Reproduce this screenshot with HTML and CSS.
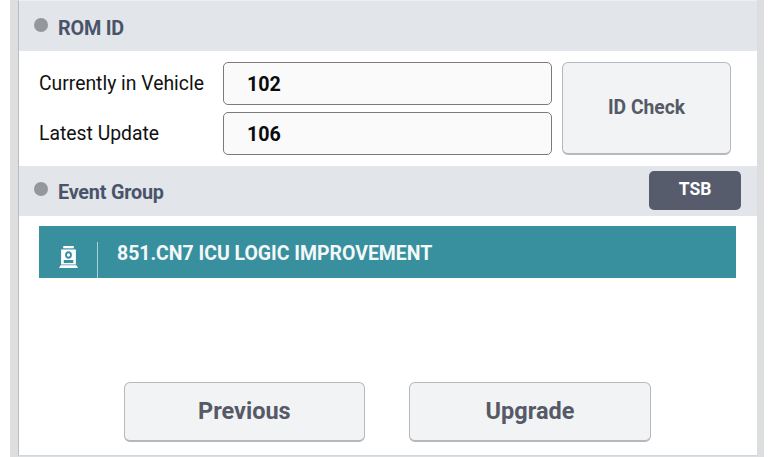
FILE: index.html
```html
<!DOCTYPE html>
<html lang="en">
<head>
<meta charset="utf-8">
<title>ROM ID</title>
<link rel="stylesheet" href="styles.css">
</head>
<body>
<main class="frame">
  <div class="panel">
    <header class="section-head rom-head">
      <span class="dot"></span>
      <h2 class="section-title">ROM ID</h2>
    </header>
    <section class="rom-body">
      <div class="rom-fields">
        <div class="field">
          <span class="field-label">Currently in Vehicle</span>
          <div class="field-value">102</div>
        </div>
        <div class="field">
          <span class="field-label">Latest Update</span>
          <div class="field-value">106</div>
        </div>
      </div>
      <button class="btn btn-check" type="button">ID Check</button>
    </section>
    <header class="section-head event-head">
      <span class="dot"></span>
      <h2 class="section-title">Event Group</h2>
      <button class="btn-tsb" type="button">TSB</button>
    </header>
    <section class="event-body">
      <div class="event-row">
        <span class="event-icon">
          <svg viewBox="1 1 18 19" width="19" height="22" preserveAspectRatio="none" aria-hidden="true">
            <rect x="5" y="1" width="10" height="2" fill="#fff"/>
            <path fill="#fff" fill-rule="evenodd" d="M3 4h14v13H3z M10 5.6a3.2 3.2 0 1 0 0 6.4a3.2 3.2 0 0 0 0-6.4z M5.5 13v2.6h9V13z"/>
            <circle cx="10" cy="8.8" r="1.5" fill="#fff"/>
            <path fill="#fff" d="M2.5 17.6h15l1.5 2.4H1z"/>
          </svg>
        </span>
        <span class="event-text">851.CN7 ICU LOGIC IMPROVEMENT</span>
      </div>
    </section>
    <footer class="actions">
      <button class="btn btn-action" type="button">Previous</button>
      <button class="btn btn-action" type="button">Upgrade</button>
    </footer>
  </div>
</main>
</body>
</html>
```
FILE: styles.css
```css
* { box-sizing: border-box; }
html, body { margin: 0; height: 457px; background: #fff; overflow: hidden; }
body { font-family: Roboto, "Liberation Sans", sans-serif; padding-left: 10px; }
.frame {
  width: 754px;
  height: 457px;
  background: #dcdee0;
  padding: 0 7px 0 9px;
}
.panel {
  height: 456px;
  background: #fff;
  border-top: 1px solid #eef0f2;
  border-bottom: 1px solid #d4d6d9;
  display: flex;
  flex-direction: column;
  border-left: 1px solid #b9bcc0;
  margin-left: -1px;
}
.section-head {
  display: flex;
  align-items: center;
  background: #e2e5e9;
  padding-left: 15px;
  flex: none;
}
.rom-head { height: 50px; }
.event-head { height: 50px; position: relative; padding-bottom: 2px; }
.dot {
  width: 14px;
  height: 14px;
  border-radius: 50%;
  background: #94979c;
  margin-right: 10px;
  margin-top: -2px;
}
.section-title {
  margin: 5px 0 0;
  font-size: 19.8px;
  font-weight: 700;
  letter-spacing: -0.2px;
  color: #49546a;
}
.rom-body {
  display: flex;
  height: 115px;
  padding: 11px 25px 0 20px;
  gap: 10px;
  flex: none;
}
.rom-fields { width: 513px; display: flex; flex-direction: column; gap: 7px; }
.field { display: flex; align-items: center; }
.field-label {
  width: 184px;
  font-size: 19.35px;
  color: #111;
}
.field-value {
  width: 329px;
  height: 43px;
  border: 1px solid #7b7b7b;
  border-radius: 5px;
  background: #fafafa;
  padding: 2px 0 0 23px;
  display: flex;
  align-items: center;
  font-size: 19.7px;
  font-weight: 700;
  color: #0b0b0b;
}
.btn {
  font-family: inherit;
  font-weight: 700;
  color: #565a67;
  background: #f1f3f5;
  border: 1px solid #b6b8bb;
  border-bottom-width: 2px;
  border-radius: 6px;
  padding: 0;
}
.btn-check { width: 169px; height: 93px; font-size: 19.3px; padding-bottom: 2px; }
.btn-tsb {
  position: absolute;
  left: 630px;
  top: 5px;
  width: 92px;
  height: 39px;
  border: 0;
  border-radius: 5px;
  background: #575c6c;
  color: #fff;
  font-family: inherit;
  font-size: 17.5px;
  font-weight: 700;
  padding: 0 0 3px;
}
.event-body { padding: 10px 20px 0; flex: none; }
.event-row {
  width: 697px;
  height: 52px;
  background: #38909f;
  display: flex;
  align-items: flex-end;
}
.event-icon {
  width: 59px;
  height: 36px;
  flex: none;
  display: flex;
  align-items: center;
  justify-content: center;
  border-right: 1px solid #a9d3da;
  padding-bottom: 6px;
}
.event-text {
  align-self: center;
  margin-left: 19px;
  margin-top: 2px;
  font-size: 19.45px;
  font-weight: 700;
  color: #f4f8f9;
}
.actions {
  display: flex;
  gap: 44px;
  margin-top: 104px;
  padding-left: 104.5px;
}
.btn-action { width: 241.7px; height: 60px; font-size: 23.5px; padding-bottom: 2px; }
```
